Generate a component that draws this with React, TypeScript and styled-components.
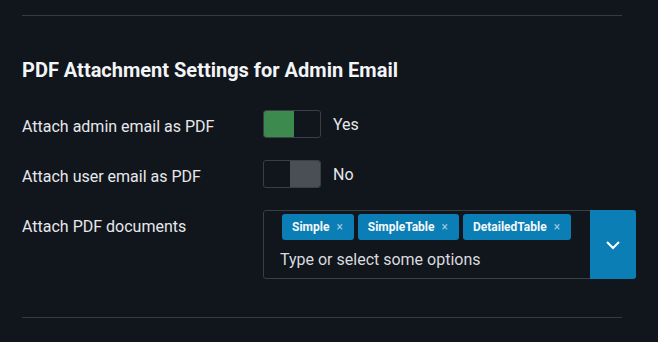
import { createGlobalStyle } from 'styled-components'
import styled from 'styled-components'

const GlobalStyle = createGlobalStyle`
	html, body {
		margin: 0;
		padding: 0;
		background: #11151c;
	}
	body {
		font-family: Roboto, "Liberation Sans", sans-serif;
		color: #e6e8eb;
	}
`

const Page = styled.div`
	width: 658px;
	height: 342px;
	overflow: hidden;
	background: #11151c;
	padding: 0 0 0 22px;
	box-sizing: border-box;
`

const Section = styled.div`
	width: 600px;
	padding-top: 15px;
`

const Divider = styled.div`
	height: 1px;
	background: #363b43;
`

const Heading = styled.h2`
	margin: 42px 0 28px;
	font-size: 20px;
	line-height: 24px;
	font-weight: 700;
	color: #f2f4f6;
`

const Rows = styled.div`
	display: flex;
	flex-direction: column;
	gap: 22px;
	margin-bottom: 38px;
`

const Row = styled.div`
	display: flex;
	align-items: flex-start;
`

const Label = styled.div`
	width: 241px;
	flex: none;
	padding-top: 6px;
	font-size: 16px;
	line-height: 22px;
	color: #e6e8eb;
`

const ToggleWrap = styled.div`
	display: flex;
	align-items: center;
	gap: 12px;
	height: 28px;
`

const Track = styled.div<{ on: boolean }>`
	width: 58px;
	height: 28px;
	box-sizing: border-box;
	border: 1px solid #3a3f47;
	border-radius: 3px;
	display: flex;
	justify-content: ${p => (p.on ? 'flex-start' : 'flex-end')};
	background: #11151c;
	overflow: hidden;
`

const Knob = styled.div<{ on: boolean }>`
	width: 30px;
	height: 100%;
	background: ${p => (p.on ? '#3d8a4e' : '#4a4e55')};
`

const ToggleText = styled.span`
	font-size: 16px;
	color: #e6e8eb;
`

const Select = styled.div`
	width: 373px;
	height: 69px;
	flex: none;
	box-sizing: border-box;
	border: 1px solid #3a3f47;
	border-radius: 3px;
	display: flex;
`

const SelectBody = styled.div`
	flex: 1;
	padding: 3px 0 0 18px;
	display: flex;
	flex-direction: column;
`

const Chips = styled.div`
	display: flex;
	gap: 4px;
`

const Chip = styled.span`
	display: inline-flex;
	align-items: center;
	height: 26px;
	padding: 0 11px 0 10px;
	background: #0a7eb5;
	border-radius: 3px;
	font-size: 12px;
	font-weight: 700;
	color: #f4f8fb;
`

const ChipClose = styled.span`
	margin-left: 7px;
	font-weight: 400;
	font-size: 12px;
	color: #9fcbe2;
`

const Placeholder = styled.div`
	margin-top: 10px;
	margin-left: -2px;
	font-size: 16px;
	line-height: 20px;
	color: #d8dbdf;
`

const DropButton = styled.div`
	width: 46px;
	margin: -1px -1px -1px 0;
	background: #0a7eb5;
	border-radius: 0 3px 3px 0;
	display: flex;
	align-items: center;
	justify-content: center;
`

const Toggle = ({ on, text }: { on: boolean, text: string }) => (
	<ToggleWrap>
		<Track on={on}>
			<Knob on={on} />
		</Track>
		<ToggleText>{text}</ToggleText>
	</ToggleWrap>
)

const options = ['Simple', 'SimpleTable', 'DetailedTable']

export default function App() {
	return (
		<Page>
			<GlobalStyle />
			<Section>
				<Divider />
				<Heading>PDF Attachment Settings for Admin Email</Heading>
				<Rows>
					<Row>
						<Label>Attach admin email as PDF</Label>
						<Toggle on text="Yes" />
					</Row>
					<Row>
						<Label>Attach user email as PDF</Label>
						<Toggle on={false} text="No" />
					</Row>
					<Row>
						<Label>Attach PDF documents</Label>
						<Select>
							<SelectBody>
								<Chips>
									{options.map(o => (
										<Chip key={o}>
											{o}
											<ChipClose>×</ChipClose>
										</Chip>
									))}
								</Chips>
								<Placeholder>Type or select some options</Placeholder>
							</SelectBody>
							<DropButton>
								<svg width="16" height="10" viewBox="0 0 16 10">
									<path d="M2 2 L8 8 L14 2" fill="none" stroke="#fff" strokeWidth="2" />
								</svg>
							</DropButton>
						</Select>
					</Row>
				</Rows>
				<Divider />
			</Section>
		</Page>
	)
}
